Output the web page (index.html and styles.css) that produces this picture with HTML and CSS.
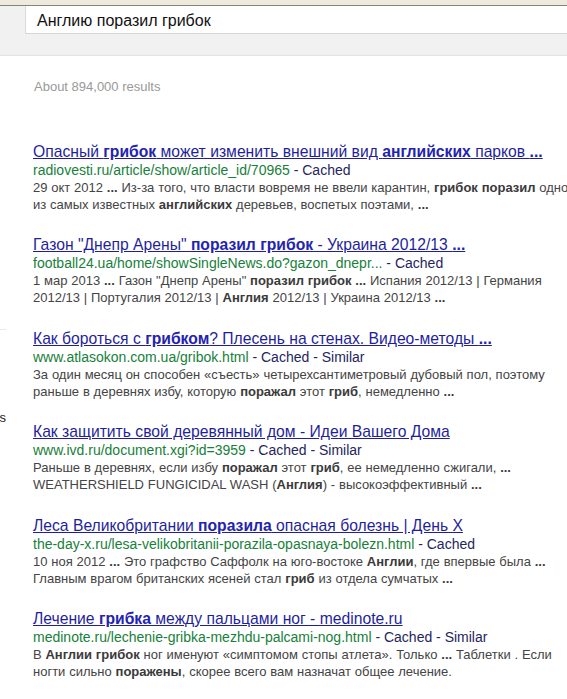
FILE: index.html
```html
<!DOCTYPE html>
<html lang="ru">
<head>
<meta charset="utf-8">
<title>Англию поразил грибок</title>
<link rel="stylesheet" href="styles.css">
</head>
<body>
<div class="chrome"></div>
<header class="searchbar">
  <div class="query">Англию поразил грибок</div>
</header>
<div class="page">
  <nav class="leftnav">
    <div class="navrule"></div>
    <div class="navitem">Related searches</div>
  </nav>
  <main class="main">
    <div class="stats">About 894,000 results</div>
    <ol class="results">
      <li class="result">
        <a class="title">Опасный <b>грибок</b> может изменить внешний вид <b>английских</b> парков <b>...</b></a>
        <div class="url">radiovesti.ru/article/show/article_id/70965 <span class="links">- Cached</span></div>
        <div class="snippet">29 окт 2012 <b>...</b> Из-за того, что власти вовремя не ввели карантин, <b>грибок поразил</b> одно<br>из самых известных <b>английских</b> деревьев, воспетых поэтами, <b>...</b></div>
      </li>
      <li class="result">
        <a class="title">Газон "Днепр Арены" <b>поразил грибок</b> - Украина 2012/13 <b>...</b></a>
        <div class="url">football24.ua/home/showSingleNews.do?gazon_dnepr... <span class="links">- Cached</span></div>
        <div class="snippet">1 мар 2013 <b>...</b> Газон "Днепр Арены" <b>поразил грибок ...</b> Испания 2012/13 | Германия<br>2012/13 | Португалия 2012/13 | <b>Англия</b> 2012/13 | Украина 2012/13 <b>...</b></div>
      </li>
      <li class="result">
        <a class="title">Как бороться с <b>грибком</b>? Плесень на стенах. Видео-методы <b>...</b></a>
        <div class="url">www.atlasokon.com.ua/gribok.html <span class="links">- Cached - Similar</span></div>
        <div class="snippet">За один месяц он способен «съесть» четырехсантиметровый дубовый пол, поэтому<br>раньше в деревнях избу, которую <b>поражал</b> этот <b>гриб</b>, немедленно <b>...</b></div>
      </li>
      <li class="result">
        <a class="title">Как защитить свой деревянный дом - Идеи Вашего Дома</a>
        <div class="url">www.ivd.ru/document.xgi?id=3959 <span class="links">- Cached - Similar</span></div>
        <div class="snippet">Раньше в деревнях, если избу <b>поражал</b> этот <b>гриб</b>, ее немедленно сжигали, <b>...</b><br>WEATHERSHIELD FUNGICIDAL WASH (<b>Англия</b>) - высокоэффективный <b>...</b></div>
      </li>
      <li class="result">
        <a class="title">Леса Великобритании <b>поразила</b> опасная болезнь | День Х</a>
        <div class="url">the-day-x.ru/lesa-velikobritanii-porazila-opasnaya-bolezn.html <span class="links">- Cached</span></div>
        <div class="snippet">10 ноя 2012 <b>...</b> Это графство Саффолк на юго-востоке <b>Англии</b>, где впервые была <b>...</b><br>Главным врагом британских ясеней стал <b>гриб</b> из отдела сумчатых <b>...</b></div>
      </li>
      <li class="result">
        <a class="title">Лечение <b>грибка</b> между пальцами ног - medinote.ru</a>
        <div class="url">medinote.ru/lechenie-gribka-mezhdu-palcami-nog.html <span class="links">- Cached - Similar</span></div>
        <div class="snippet">В <b>Англии грибок</b> ног именуют «симптомом стопы атлета». Только <b>...</b> Таблетки . Если<br>ногти сильно <b>поражены</b>, скорее всего вам назначат общее лечение.</div>
      </li>
    </ol>
  </main>
</div>
</body>
</html>
```

FILE: styles.css
```css
html, body {
  margin: 0;
  padding: 0;
  background: #ffffff;
}

body {
  font-family: "Liberation Sans", Arial, sans-serif;
  width: 567px;
  overflow: hidden;
}

.chrome {
  height: 5px;
  background: #eeeadc;
  border-bottom: 1px solid #85837a;
}

.searchbar {
  display: flex;
  height: 49px;
  padding-left: 25px;
  background: #f1f1f1;
  border-bottom: 1px solid #e3e3e3;
}

.query {
  flex: 1;
  height: 27px;
  line-height: 29px;
  padding-left: 11px;
  font-size: 16px;
  color: #111;
  background: #fff;
  border-left: 1px solid #dadada;
  border-bottom: 1px solid #d6d6d6;
}

.page {
  display: flex;
}

.leftnav {
  width: 6px;
  flex: none;
  display: flex;
  flex-direction: column;
  align-items: flex-end;
  overflow: hidden;
}

.navrule {
  width: 15px;
  height: 1px;
  margin-top: 273px;
  background: #e8e8e8;
  align-self: flex-start;
}

.navitem {
  margin-top: 80px;
  white-space: nowrap;
  font-size: 13px;
  color: #222;
}

.main {
  flex: 1;
  padding-left: 27px;
}

.stats {
  margin-top: 23px;
  height: 16px;
  line-height: 16px;
  font-size: 13px;
  color: #999;
  padding-left: 1px;
}

.results {
  list-style: none;
  margin: 0;
  padding: 0;
  margin-top: 48px;
}

.result {
  margin-bottom: 23.4px;
}

.title {
  display: block;
  font-size: 15.7px;
  line-height: 18px;
  color: #1f1f9c;
  text-decoration: underline;
  white-space: nowrap;
}

.title b {
  color: #2323b0;
}

.url {
  font-size: 14px;
  line-height: 18px;
  color: #17803a;
  white-space: nowrap;
}

.links {
  color: #25255e;
}

.snippet {
  font-size: 13px;
  line-height: 17px;
  color: #444;
  white-space: nowrap;
  letter-spacing: 0;
  word-spacing: 0.2px;
}

.snippet b {
  color: #3a3a3a;
}
```
